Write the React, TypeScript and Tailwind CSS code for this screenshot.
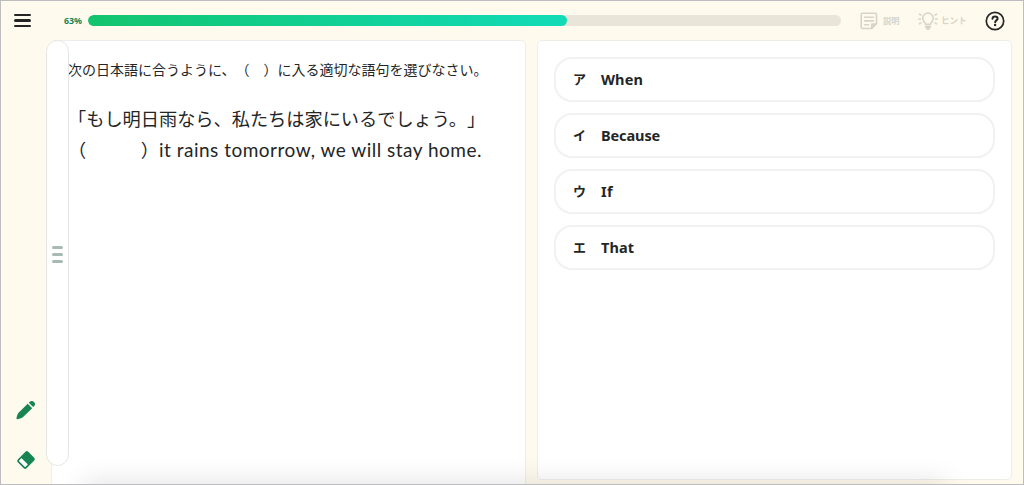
import { useState } from "react";

const choices = [
    { mark: "ア", text: "When", tracking: "tracking-[0.1px]" },
    { mark: "イ", text: "Because", tracking: "tracking-[-0.1px]" },
    { mark: "ウ", text: "If", tracking: "tracking-[0.4px]" },
    { mark: "エ", text: "That", tracking: "tracking-[0.1px]" },
];

function NoteIcon() {
    return (
        <svg width="18" height="18" viewBox="0 0 18 18" fill="none" stroke="currentColor" strokeWidth="1.6" strokeLinecap="round" strokeLinejoin="round">
            <path d="M11.6 16.5H2.6a1.4 1.4 0 0 1-1.4-1.4V2.6a1.4 1.4 0 0 1 1.4-1.4h12.5a1.4 1.4 0 0 1 1.4 1.4v9z" />
            <path d="M11.8 16V12h4.3z" fill="currentColor" />
            <path d="M4.6 5.2h8.7M4.6 8.9h8.7M4.6 12.7h4" />
        </svg>
    );
}

function HintIcon() {
    return (
        <svg width="20" height="18" viewBox="0 0 20 18" fill="none" stroke="currentColor" strokeWidth="1.6" strokeLinecap="round">
            <path d="M7.6 12.4c0-2-2.8-2.700-2.8-6.200a5.2 5.2 0 0 1 10.4 0c0 3.5-2.8 4.200-2.8 6.200z" />
            <path d="M8 14.8h4M9.200 16.700h1.600" strokeWidth="2.2" />
            <path d="M1.5 2.200l1.500.8M.8 7h1.8M1.5 11.800l1.500-.9M18.5 2.200l-1.500.8M19.2 7h-1.8M18.5 11.800l-1.500-.9" />
        </svg>
    );
}

function HelpIcon() {
    return (
        <svg width="20" height="20" viewBox="0 0 20 20" fill="none" stroke="currentColor" strokeLinecap="round" strokeLinejoin="round">
            <circle cx="10" cy="10" r="8.7" strokeWidth="1.7" />
            <path d="M7.5 7.8c.1-1.5 1.1-2.2 2.5-2.2 1.5 0 2.6.8 2.6 2.1 0 1.6-2.4 1.8-2.4 3.5" strokeWidth="2" />
            <circle cx="10.1" cy="14" r="1.2" fill="currentColor" stroke="none" />
        </svg>
    );
}

function PencilIcon() {
    return (
        <svg width="20" height="20" viewBox="0 0 20 20" fill="currentColor">
            <path d="M1 19.2c-.4 0-.6-.3-.5-.7.2-2 .8-4 1.8-5.6L11.7 3.8l4.5 4.4-9.4 9c-1.6 1.1-3.8 1.8-5.8 2z" />
            <path d="M12.8 2.7l1-1c1.2-1.1 2.9-1 4 .1l.4.4c1.1 1.1 1.1 2.8 0 3.9l-1 1z" />
        </svg>
    );
}

function EraserIcon() {
    return (
        <svg width="20" height="20" viewBox="0 0 20 20">
            <g transform="rotate(-45 10 10)">
                <rect x="2.6" y="3.8" width="14.8" height="12.4" rx="2" fill="currentColor" />
                <rect x="4.2" y="5.5" width="3.9" height="9" rx=".6" fill="#fff" />
            </g>
        </svg>
    );
}

export default function App() {
    const [selected, setSelected] = useState("");
    const progress = 63.6;

    return (
        <div className="relative flex h-[485px] w-[1024px] flex-col overflow-hidden border border-[#bdbdbf] bg-[#fffaee] font-['Noto_Sans','Noto_Sans_CJK_JP',sans-serif] text-[#242626]">
            <header className="flex h-[39px] shrink-0 items-center">
                <button className="ml-[13px] flex w-[17px] flex-col gap-[3px]">
                    <span className="h-[2.5px] rounded-full bg-[#242626]" />
                    <span className="h-[2.5px] rounded-full bg-[#242626]" />
                    <span className="h-[2.5px] rounded-full bg-[#242626]" />
                </button>

                <span className="ml-[33px] w-[24px] pt-[2px] text-[8.8px] font-bold text-[#168453]">63%</span>

                <div className="h-[11px] w-[753px] overflow-hidden rounded-full bg-[#e9e5d9]">
                    <div
                        className="h-full rounded-full bg-linear-to-r from-[#13c46c] to-[#12dbb7]"
                        style={{ width: `${progress}%` }}
                    />
                </div>

                <div className="ml-[19px] flex w-[58px] items-center gap-[5px] text-[#d7d4c9]">
                    <NoteIcon />
                    <span className="pt-px text-[8.2px] font-bold whitespace-nowrap">説明</span>
                </div>
                <div className="flex w-[67px] items-center gap-[3px] text-[#d7d4c9]">
                    <HintIcon />
                    <span className="pt-px text-[8.6px] font-bold whitespace-nowrap">ヒント</span>
                </div>
                <HelpIcon />
            </header>

            <main className="flex min-h-0 flex-1">
                <aside className="flex w-[50px] shrink-0 flex-col justify-end gap-[30px] pb-[14px] pl-[15px] text-[#168453]">
                    <button className="w-5"><PencilIcon /></button>
                    <button className="w-5"><EraserIcon /></button>
                </aside>

                <section className="relative w-[475px] shrink-0 rounded-t-[5px] border border-b-0 border-[#edede9] bg-white">
                    <div className="absolute -top-px -left-[6px] flex h-[426px] w-[23px] flex-col items-center justify-center gap-1 rounded-full border border-[#e6e6e4] bg-white pt-[2px]">
                        <span className="h-[3px] w-[11px] rounded-full bg-[#a9bab5]" />
                        <span className="h-[3px] w-[11px] rounded-full bg-[#a9bab5]" />
                        <span className="h-[3px] w-[11px] rounded-full bg-[#a9bab5]" />
                    </div>

                    <div className="pt-[17px] pl-[16px] font-['Noto_Sans_CJK_JP',sans-serif] whitespace-nowrap [text-spacing-trim:space-all]">
                        <p className="text-[14px] leading-[22px]">
                            次の日本語に合うように、（　）に入る適切な語句を選びなさい。
                        </p>
                        <div className="mt-[23px] text-[18.2px] leading-[31px]">
                            <p>「もし明日雨なら、私たちは家にいるでしょう。」</p>
                            <p>
                                （　　　）
                                <span className="font-['Lato','Noto_Sans',sans-serif] text-[19px] tracking-[0.5px]">it rains tomorrow, we will stay home.</span>
                            </p>
                        </div>
                    </div>
                </section>

                <section className="mb-[4px] ml-[11px] w-[475px] shrink-0 rounded-[5px] border border-[#eeeee9] bg-white px-[16px] pt-[16px]">
                    <ul className="flex flex-col gap-[11px]">
                        {choices.map((choice) => (
                            <li key={choice.mark}>
                                <button
                                    className="flex h-[45px] w-full items-center rounded-[18px] border-2 border-[#f0f1f1] pt-px pl-[17px] text-left"
                                    aria-pressed={selected === choice.mark}
                                    onClick={() => setSelected(choice.mark)}
                                >
                                    <span className="w-[28px] text-[13px] font-bold">{choice.mark}</span>
                                    <span className={`text-[14.5px] font-bold ${choice.tracking}`}>{choice.text}</span>
                                </button>
                            </li>
                        ))}
                    </ul>
                </section>
            </main>

            {/* soft shadow rising from the bottom bar */}
            <div className="pointer-events-none absolute -bottom-[21px] left-[84px] h-5 w-[860px] shadow-[0_0_28px_2px_rgba(0,0,0,0.13)]" />
        </div>
    );
}
